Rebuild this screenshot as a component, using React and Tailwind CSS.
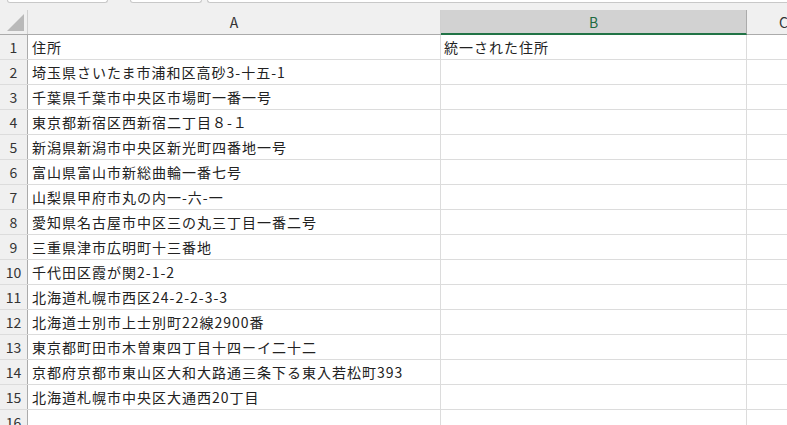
const rows = [
  '住所',
  '埼玉県さいたま市浦和区高砂3-十五-1',
  '千葉県千葉市中央区市場町一番一号',
  '東京都新宿区西新宿二丁目８-１',
  '新潟県新潟市中央区新光町四番地一号',
  '富山県富山市新総曲輪一番七号',
  '山梨県甲府市丸の内一-六-一',
  '愛知県名古屋市中区三の丸三丁目一番二号',
  '三重県津市広明町十三番地',
  '千代田区霞が関2-1-2',
  '北海道札幌市西区24-2-2-3-3',
  '北海道士別市上士別町22線2900番',
  '東京都町田市木曽東四丁目十四ーイ二十二',
  '京都府京都市東山区大和大路通三条下る東入若松町393',
  '北海道札幌市中央区大通西20丁目',
  '',
];

const font = { fontFamily: '"Noto Sans CJK JP", "Noto Sans", sans-serif' };

export default function App() {
  return (
    <div className="w-[787px] h-[425px] overflow-hidden bg-white text-[14px] text-[#222]" style={font}>
      {/* tab strip */}
      <div className="h-[10px] bg-[#f0f0f0] flex">
        <div className="ml-[7px] w-[101px] h-[3px] bg-white border-b border-x border-[#c8c8c8] rounded-b-[4px]" />
        <div className="ml-[22px] w-[72px] h-[3px] bg-white border-b border-x border-[#c8c8c8] rounded-b-[4px]" />
        <div className="ml-[5px] flex-1 h-[3px] bg-white border-b border-l border-[#c8c8c8] rounded-bl-[4px]" />
      </div>
      {/* column headers */}
      <div className="flex h-[25px] bg-[#f0f0f0] border-b border-[#ababab]">
        <div className="w-[28px] shrink-0 border-r border-[#d0d0d0] relative">
          <div className="absolute right-[3px] bottom-[3px] w-0 h-0 border-l-[17px] border-l-transparent border-b-[17px] border-b-[#b9b9b9]" />
        </div>
        <div className="w-[413px] shrink-0 border-r border-[#d0d0d0] flex items-center justify-center text-[#333] pt-[1px]">A</div>
        <div className="w-[306px] shrink-0 bg-[#d2d2d2] border-r border-[#ababab] border-b-2 border-b-[#217346] -mb-[1px] flex items-center justify-center text-[#1e6b40] pt-[1px]">B</div>
        <div className="flex-1 flex items-center pl-[32px] text-[#333] pt-[1px]">C</div>
      </div>
      {rows.map((text, i) => (
        <div key={i} className="flex h-[25px] border-b border-[#dcdcdc]">
          <div className="w-[28px] shrink-0 bg-[#f0f0f0] border-r border-[#ababab] flex items-center justify-center text-[#333] leading-none">
            {i + 1}
          </div>
          <div className="w-[413px] shrink-0 border-r border-[#dcdcdc] flex items-center pl-[4px] whitespace-nowrap leading-none tracking-[1px]">
            {text}
          </div>
          <div className="w-[306px] shrink-0 border-r border-[#dcdcdc] flex items-center pl-[3px] whitespace-nowrap leading-none tracking-[1px]">
            {i === 0 ? '統一された住所' : ''}
          </div>
          <div className="flex-1" />
        </div>
      ))}
    </div>
  );
}
